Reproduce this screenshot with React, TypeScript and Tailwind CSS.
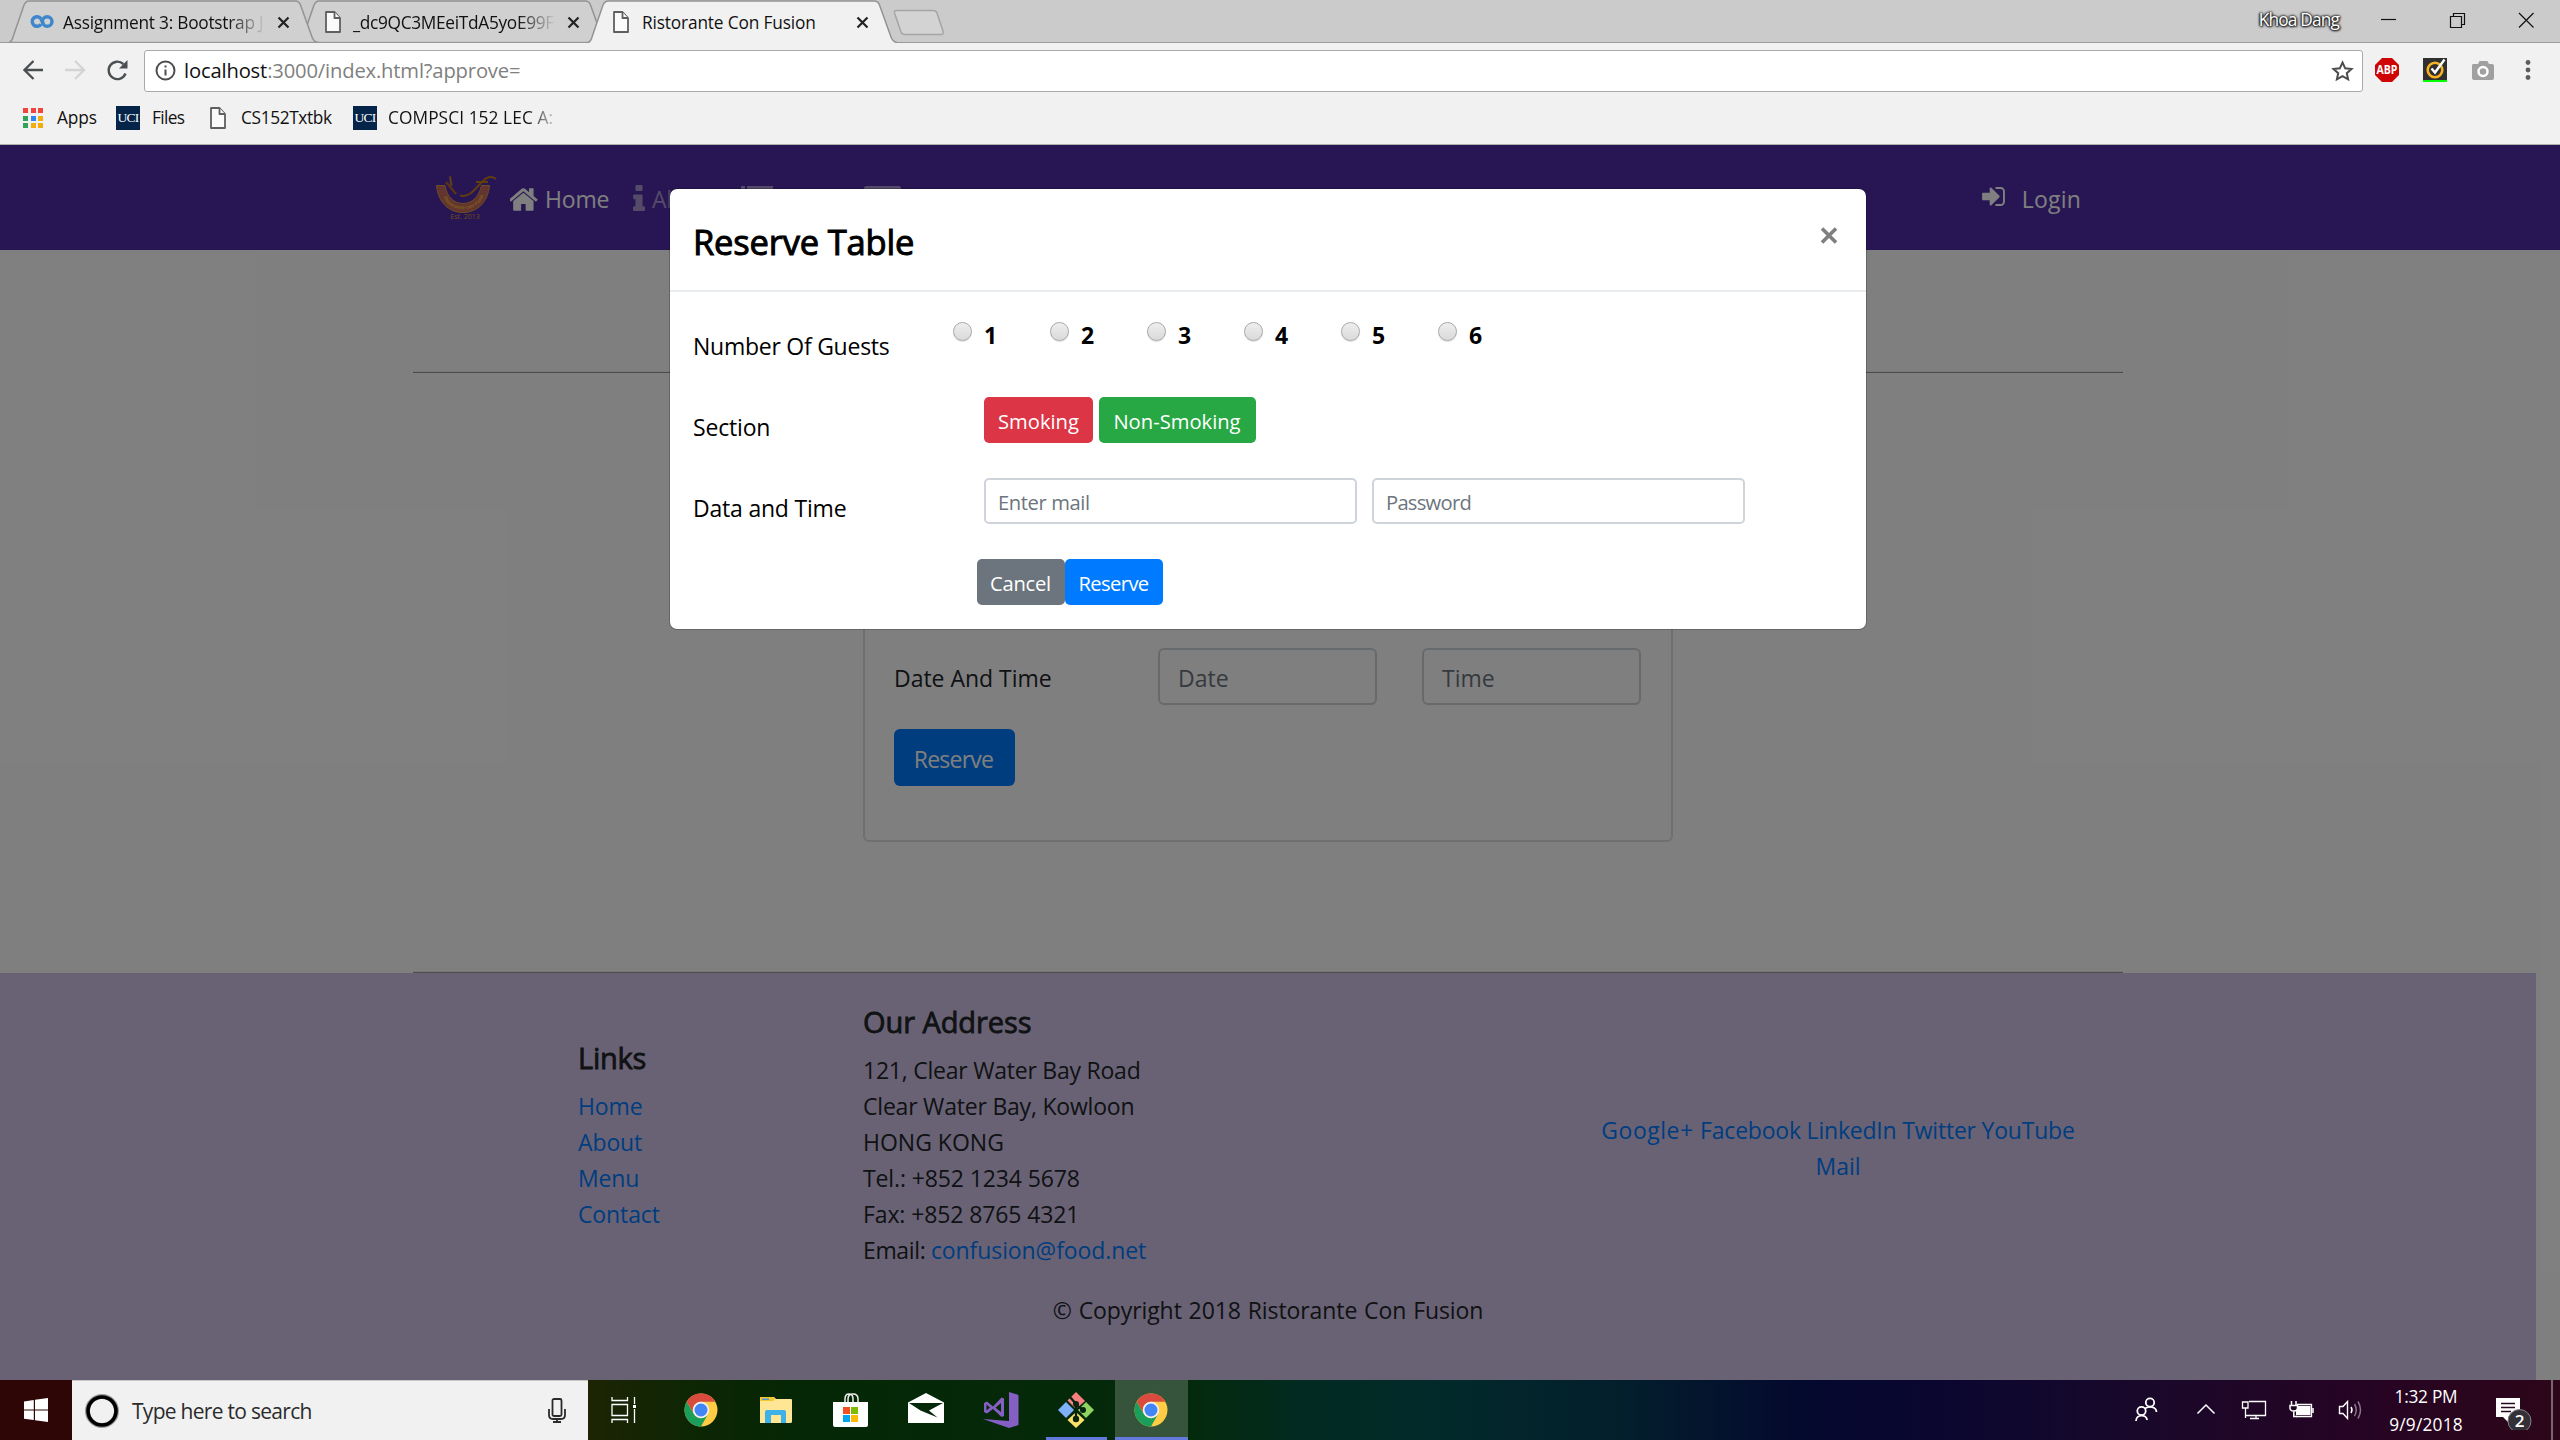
import type { ReactNode } from "react";

function DocIcon({ className = "" }: { className?: string }) {
  return (
    <svg className={className} width="16" height="22" viewBox="0 0 16 22" fill="#fafafa" stroke="#5f5f5f" strokeWidth="1.8" strokeLinejoin="round">
      <path d="M1 1h8.5L15 7v14H1z" />
      <path d="M9.5 1v6H15" />
    </svg>
  );
}

function CourseraIcon() {
  return (
    <svg width="24" height="13" viewBox="0 0 24 13" fill="none" stroke="#3f87cc" strokeWidth="3.4">
      <path d="M11 9.2A4.8 4.8 0 1 1 11 3.8" />
      <path d="M11 3.8L13.4 9.2" />
      <circle cx="17.2" cy="6.5" r="4.8" />
    </svg>
  );
}

function Tab({ icon, title, active, z, fade, iconPad, tracking }: { icon: ReactNode; title: string; active?: boolean; z: string; fade?: boolean; iconPad: string; tracking: string }) {
  return (
    <div className={`relative flex h-[43px] w-[309px] shrink-0 items-center ${z} ${iconPad}`}>
      <svg className="absolute inset-0" width="309" height="43" viewBox="0 0 309 43">
        <path d="M0 43C2 42 3 41 4 37L15 5C16.5 2 17.5 1 20 1H286C289 1 290.500 2 291.500 5L303 37C304.500 41 306 42 309 43Z" fill={active ? "#f1f1f1" : "#d0d0d0"} />
        <path d="M0 42.500C2 42 3 41 4 37L15 5C16.500 2 17.500 1 20 1H286C289 1 290.500 2 291.500 5L303 37C304.500 41 306 42 309 42.500" fill="none" stroke="#939393" strokeWidth="1.500" />
        {!active && <path d="M0 42.400H309" stroke="#989898" strokeWidth="1.200" />}
      </svg>
      <div className="relative flex w-[54px] shrink-0 items-center">{icon}</div>
      <div className={`absolute left-[54px] top-[11px] whitespace-nowrap text-[17.300px] leading-6 text-[#111] ${tracking} ${fade ? "[mask-image:linear-gradient(to_right,black_165px,transparent_203px)]" : ""}`}>{title}</div>
      <svg className="absolute left-[268px] top-[16px]" width="13" height="13" viewBox="0 0 13 13" stroke="#222" strokeWidth="2.200">
        <path d="M1.500 1.500L11.500 11.500M11.500 1.500L1.500 11.500" />
      </svg>
    </div>
  );
}

function Uci() {
  return <span className="flex h-6 w-6 items-center justify-center bg-[#04244a] font-['Liberation_Serif',serif] text-[13.500px] leading-none tracking-[-0.06em] text-white">UCI</span>;
}

const appColors = ["#f2443a", "#f2443a", "#f2443a", "#34a35a", "#2f86f0", "#f5ad0c", "#34a35a", "#f5ad0c", "#f5ad0c"];

function BrowserChrome() {
  return (
    <header className="flex h-[145px] shrink-0 flex-col border-b border-[#b0b0b0] bg-[#f1f1f1]">
      <div className="flex h-[43px] shrink-0 border-b border-[#9a9a9a] bg-[#cbcbcb] pl-[9px]">
        <Tab z="z-20" iconPad="pl-[21px]" icon={<CourseraIcon />} title="Assignment 3: Bootstrap J" fade tracking="tracking-[-0.014em]" />
        <div className="-ml-[19.500px]">
          <Tab z="z-10" iconPad="pl-[26px]" icon={<DocIcon />} title="_dc9QC3MEeiTdA5yoE99F" fade tracking="tracking-[-0.018em]" />
        </div>
        <div className="relative z-30 -ml-[19.500px]">
          <Tab active z="z-30" iconPad="pl-[25px]" icon={<DocIcon />} title="Ristorante Con Fusion" tracking="tracking-[-0.009em]" />
        </div>
        <svg className="-ml-1 mt-[9px]" width="52" height="27" viewBox="0 0 52 27" fill="#d3d3d3" stroke="#a5a5a5" strokeWidth="1.500">
          <path d="M3 1.500H40Q43 1.500 44 4L50 22Q51 25.500 48 25.500H12Q9 25.500 8 23L1.500 4Q1 1.500 3 1.500Z" />
        </svg>
        <div className="ml-auto flex h-[39px] items-center">
          <span className="mr-[41px] text-[17.300px] leading-6 tracking-[-0.048em] text-white [text-shadow:0_0_2px_#111,0_0_3px_#222,1px_1px_2px_#222,-1px_0_2px_#333]">Khoa Dang</span>
          <svg width="180" height="39" viewBox="0 0 180 39" fill="none" stroke="#111" strokeWidth="1.200">
            <path d="M1 19.500H16" />
            <path d="M70.500 16.500H81.500V27.500H70.500ZM73.500 16.500V13.500H84.500V24.500H81.500" />
            <path d="M139 13L153.500 27.500M153.500 13L139 27.500" />
          </svg>
        </div>
      </div>

      <div className="flex h-[54px] shrink-0 items-center">
        <svg className="ml-[23px]" width="106" height="24" viewBox="0 0 106 24" fill="none">
          <path d="M20 12H1.500M10.500 3L1.500 12L10.500 21" stroke="#4c4f52" strokeWidth="2.300" />
          <path d="M42 12H61M52 3L61 12L52 21" stroke="#d4d4d4" strokeWidth="2.300" />
          <path d="M102.500 15.500A8.700 8.700 0 1 1 100.300 6" stroke="#4c4f52" strokeWidth="2.400" />
          <path d="M104.500 2V10.500H96Z" fill="#4c4f52" />
        </svg>
        <div className="ml-[15px] mt-px flex h-[42px] w-[2219px] items-center rounded-[3px] border-[1.500px] border-[#aaa] bg-white pl-[10px] pr-[8px]">
          <svg width="21" height="21" viewBox="0 0 21 21" fill="none" stroke="#4d4d4d" strokeWidth="2">
            <circle cx="10.500" cy="10.500" r="9" />
            <path d="M10.500 9.500V15.500M10.500 5.500V7.500" />
          </svg>
          <span className="-mt-px ml-[8px] text-[20.200px] leading-7 tracking-[-0.008em] text-[#111]">
            localhost<span className="text-[#808080]">:3000/index.html?approve=</span>
          </span>
          <svg className="ml-auto" width="23" height="22" viewBox="0 0 23 22" fill="none" stroke="#4c4c4c" strokeWidth="2">
            <path d="M11.500 2.500L14.200 8.300L20.500 9L15.800 13.200L17.100 19.400L11.500 16.200L5.900 19.400L7.200 13.200L2.500 9L8.800 8.300Z" />
          </svg>
        </div>
        <svg className="ml-[12px]" width="160" height="24" viewBox="0 0 160 24">
          <path d="M7 0H17L24 7V17L17 24H7L0 17V7Z" fill="#cf0505" />
          <text x="12" y="16.200" textAnchor="middle" fill="#fff" fontFamily="Open Sans, sans-serif" fontWeight="700" fontSize="11.500" textLength="21" lengthAdjust="spacingAndGlyphs">ABP</text>
          <path d="M48 0H72V24H48Z" fill="#303030" />
          <path d="M48 22H72V24H48Z" fill="#0f0" />
          <circle cx="60" cy="12" r="7.300" fill="none" stroke="#f6b221" strokeWidth="2.600" />
          <path d="M56.500 10.500L60 14.500L69.500 1.500" fill="none" stroke="#fff" strokeWidth="2.400" />
          <path d="M98 6H103L104.500 3H112.500L114 6H117Q119 6 119 8V20Q119 22 117 22H99Q97 22 97 20V8Q97 6 98 6Z" fill="#a0a0a0" />
          <circle cx="108" cy="13.500" r="4.500" fill="#a0a0a0" stroke="#fff" strokeWidth="2.500" />
          <g fill="#5a5d61"><circle cx="153" cy="4.500" r="2.400" /><circle cx="153" cy="12" r="2.400" /><circle cx="153" cy="19.500" r="2.400" /></g>
        </svg>
      </div>

      <nav className="flex h-[42px] items-center pl-[23px] text-[17.300px] leading-6 text-[#111]">
        <div className="grid w-5 grid-cols-3 gap-[2.500px]">
          {appColors.map((c, i) => <span key={i} className="h-[5px] w-[5px]" style={{ backgroundColor: c }} />)}
        </div>
        <span className="ml-[14px] w-[59px] tracking-[-0.006em]">Apps</span>
        <Uci />
        <span className="ml-3 w-[58px] tracking-[-0.036em]">Files</span>
        <DocIcon />
        <span className="ml-[15px] w-[112px] tracking-[-0.021em]">CS152Txtbk</span>
        <Uci />
        <span className="ml-[11px] whitespace-nowrap tracking-[0.005em] [mask-image:linear-gradient(to_right,black_140px,transparent_172px)]">COMPSCI 152 LEC A:</span>
      </nav>
    </header>
  );
}

function BrandLogo() {
  return (
    <svg width="61" height="45" viewBox="0 0 61 45" fill="none">
      <path d="M0.500 10.500H9C11 22 18 28.500 27 28.500S43 22 45.500 10.500H53.500C52 27 41.500 37.500 27 37.500S2 27 0.500 10.500Z" fill="#c86a5c" stroke="#d09a50" strokeWidth="1" />
      <path id="brand-arc" d="M7 20C11 39 43 39 47.500 20" />
      <text fill="#f0b93a" fontSize="5" fontFamily="Open Sans, sans-serif" fontWeight="700">
        <textPath href="#brand-arc" startOffset="2">Ristorante con Fusion</textPath>
      </text>
      <path d="M10 7L20 19" stroke="#b0662a" strokeWidth="2.500" />
      <path d="M14 1.500L15.500 11" stroke="#c88030" strokeWidth="2" />
      <path d="M24 20.500C33 23 38 15 46 7C50 2.500 55 0 60 4M40 7H52" stroke="#c07a1c" strokeWidth="2" />
      <text x="29" y="44" textAnchor="middle" fontSize="7" fontFamily="Open Sans, sans-serif" fill="#d39a35">Est. 2013</text>
    </svg>
  );
}

function Navbar() {
  return (
    <div className="flex h-[105px] items-center bg-[#512da8] pl-[436px] text-[23px] leading-9">
      <BrandLogo />
      <svg className="ml-[13px] mt-[3px]" width="29" height="23" viewBox="76 253 1640 1283" fill="#fff">
        <path d="M1408 992v480q0 26-19 45t-45 19h-384v-384h-256v384h-384q-26 0-45-19t-19-45v-480q0-1 .5-3t.5-3l575-474 575 474q1 2 1 6zm223-69l-62 74q-8 9-21 11h-3q-13 0-21-7l-692-577-692 577q-12 8-24 7-13-2-21-11l-62-74q-8-10-7-23.500t11-21.500l719-599q32-26 76-26t76 26l244 204v-195q0-14 9-23t23-9h192q14 0 23 9t9 23v408l219 182q10 8 11 21.500t-7 23.500z" />
      </svg>
      <span className="ml-[6px] mt-[3px] w-[88px] tracking-[-0.008em] text-white">Home</span>
      <svg className="opacity-50" width="12" height="26" viewBox="576 128 640 1408" fill="#fff">
        <path d="M1216 1344v128q0 26-19 45t-45 19h-512q-26 0-45-19t-19-45v-128q0-26 19-45t45-19h64v-384h-64q-26 0-45-19t-19-45v-128q0-26 19-45t45-19h384q26 0 45 19t19 45v576h64q26 0 45 19t19 45zm-128-1152v192q0 26-19 45t-45 19h-256q-26 0-45-19t-19-45v-192q0-26 19-45t45-19h256q26 0 45 19t19 45z" />
      </svg>
      <span className="ml-[7px] mt-[3px] w-[89px] text-white/50">About</span>
      <svg className="-mt-[1px] opacity-50" width="160" height="22" viewBox="0 0 160 22" fill="#fff">
        <path d="M0 0H4V4H0ZM6 0H32V4H6ZM0 8H4V12H0ZM6 8H32V12H6ZM0 16H4V20H0ZM6 16H32V20H6Z" />
        <rect x="123" y="0" width="37" height="22" rx="2.500" />
      </svg>
      <svg className="mb-[3px] ml-auto" width="23" height="19" viewBox="128 256 1536 1280" fill="#fff">
        <path d="M1312 896q0 26-19 45l-544 544q-19 19-45 19t-45-19-19-45v-288h-448q-26 0-45-19t-19-45v-384q0-26 19-45t45-19h448v-288q0-26 19-45t45-19 45 19l544 544q19 19 19 45zm352-352v704q0 119-84.500 203.500t-203.500 84.500h-320q-13 0-22.500-9.500t-9.500-22.500q0-4-1-20t-.5-26.500 3-23.500 10-19.500 20.500-6.500h320q66 0 113-47t47-113v-704q0-66-47-113t-113-47h-312l-11.500-1-11.500-3-8-5.500-7-9-2-13.500q0-4-1-20t-.5-26.500 3-23.500 10-19.500 20.500-6.500h320q119 0 203.500 84.500t84.500 203.500z" />
      </svg>
      <span className="ml-[17px] mr-[479px] mt-[3px] tracking-[0.008em] text-white">Login</span>
    </div>
  );
}

function ReservationCard() {
  return (
    <div className="ml-[863px] mt-[47px] flex h-[422px] w-[810px] flex-col justify-end rounded-[6px] border-2 border-black/[.125] pb-[54px] pl-[29px] text-[23px] leading-9">
      <div className="flex items-center">
        <span className="w-[264px] pt-[2px] tracking-[-0.001em]">Date And Time</span>
        <div className="flex h-[57px] w-[219px] items-center rounded-[6px] border-2 border-[#ced4da] pl-[18px] pt-[3px] text-[#6c757d]">Date</div>
        <div className="ml-[45px] flex h-[57px] w-[219px] items-center rounded-[6px] border-2 border-[#ced4da] pl-[18px] pt-[3px] text-[#6c757d]">Time</div>
      </div>
      <div className="mt-[24px] flex h-[57px] w-[121px] items-center justify-center rounded-[6px] bg-[#007bff] pr-[2px] pt-[2px] tracking-[-0.033em] text-white">Reserve</div>
    </div>
  );
}

const linkList = ["Home", "About", "Menu", "Contact"];

function Footer() {
  return (
    <footer className="h-[407px] w-[2536px] bg-[#d1c4e9] text-[23px] leading-9">
      <div className="flex h-[301px]">
        <div className="ml-[578px] w-[285px] pt-[67px]">
          <h5 className="text-[29px] leading-9 tracking-[-0.008em] [-webkit-text-stroke:0.8px]">Links</h5>
          <ul className="mt-[12px] text-[#007bff]">
            {linkList.map((l) => <li key={l} className="tracking-[-0.005em]">{l}</li>)}
          </ul>
        </div>
        <div className="w-[720px] pt-[31px]">
          <h5 className="text-[29px] leading-9 tracking-[-0.003em] [-webkit-text-stroke:0.8px]">Our Address</h5>
          <address className="mt-[12px] not-italic">
            <div className="tracking-[-0.010em]">121, Clear Water Bay Road</div>
            <div className="tracking-[-0.009em]">Clear Water Bay, Kowloon</div>
            <div>HONG KONG</div>
            <div className="tracking-[-0.005em]">Tel.: +852 1234 5678</div>
            <div className="tracking-[-0.005em]">Fax: +852 8765 4321</div>
            <div className="tracking-[-0.004em]"><span className="tracking-[-0.016em]">Email: </span><span className="text-[#007bff]">confusion@food.net</span></div>
          </address>
        </div>
        <div className="ml-[5px] w-[500px] pt-[139px] text-center text-[#007bff]">
          <div className="whitespace-nowrap tracking-[-0.009em]"><span className="tracking-[0.022em]">Google+ </span>Facebook LinkedIn Twitter YouTube</div>
          <div>Mail</div>
        </div>
      </div>
      <p className="pt-[18px] text-center tracking-[-0.004em] [word-spacing:1px]">© Copyright 2018 Ristorante Con Fusion</p>
    </footer>
  );
}

function Row({ label, tracking, children }: { label?: string; tracking?: string; children: ReactNode }) {
  return (
    <div className="flex h-[81px] items-center">
      <span className={`w-[291px] shrink-0 pt-[14px] text-[23px] leading-9 text-black ${tracking ?? ""}`}>{label}</span>
      {children}
    </div>
  );
}

function ReserveModal() {
  return (
    <div className="absolute left-[669px] top-[43px] h-[442px] w-[1198px] overflow-hidden rounded-[8px] border-[1.500px] border-black/20 bg-white bg-clip-padding">
      <div className="flex h-[103px] items-start border-b-2 border-[#e9ecef] pl-[23px] pr-[28px]">
        <h4 className="mt-[26px] text-[34.500px] leading-[54px] tracking-[-0.005em] text-black [-webkit-text-stroke:1px]">Reserve Table</h4>
        <svg className="ml-auto mt-[38px]" width="18" height="17" viewBox="0 0 18 17" stroke="#7f7f7f" strokeWidth="3.600">
          <path d="M2 1.500L16 15.500M16 1.500L2 15.500" />
        </svg>
      </div>
      <div className="pl-[23px] pt-[6px]">
        <Row label="Number Of Guests" tracking="tracking-[-0.011em]">
          <div className="-ml-[31px] flex">
            {[1, 2, 3, 4, 5, 6].map((n) => (
              <label key={n} className="flex w-[97px] items-center">
                <span className="-mt-[14px] h-[19px] w-[19px] rounded-full border-[1.500px] border-[#a9a9a9] bg-gradient-to-b from-[#eee] to-[#dadada] shadow-[0_1px_1px_#ddd]" />
                <span className="-mt-[7px] ml-[12px] text-[23px] font-bold leading-9 text-black">{n}</span>
              </label>
            ))}
          </div>
        </Row>
        <Row label="Section" tracking="tracking-[-0.008em]">
          <div className="flex h-[46px] w-[109px] items-center justify-center rounded-[5px] bg-[#dc3545] pt-[4px] text-[20.200px] text-white">Smoking</div>
          <div className="ml-[6px] flex h-[46px] w-[157px] items-center justify-center rounded-[5px] bg-[#28a745] pr-px pt-[4px] text-[20.200px] text-white">Non-Smoking</div>
        </Row>
        <Row label="Data and Time" tracking="tracking-[-0.009em]">
          <div className="flex h-[46px] w-[373px] items-center rounded-[5px] border-2 border-[#ced4da] pl-[12px] pt-[4px] text-[20.200px] tracking-[-0.020em] text-[#6c757d]">Enter mail</div>
          <div className="ml-[15px] flex h-[46px] w-[373px] items-center rounded-[5px] border-2 border-[#ced4da] pl-[12px] pt-[4px] text-[20.200px] tracking-[-0.037em] text-[#6c757d]">Password</div>
        </Row>
        <Row>
          <div className="-ml-[7px] flex h-[46px] w-[88px] items-center justify-center rounded-[5px] bg-[#6c757d] pr-px pt-[4px] text-[20.200px] tracking-[-0.012em] text-white">Cancel</div>
          <div className="flex h-[46px] w-[98px] items-center justify-center rounded-[5px] bg-[#007bff] pr-px pt-[4px] text-[20.200px] tracking-[-0.030em] text-white">Reserve</div>
        </Row>
      </div>
    </div>
  );
}

function ChromeIcon() {
  return (
    <svg width="34" height="34" viewBox="0 0 34 34">
      <circle cx="17" cy="17" r="16.500" fill="#fc4" />
      <path d="M2.700 8.800A16.500 16.500 0 0 1 31.300 8.800H17A8.200 8.200 0 0 0 9.900 21.100Z" fill="#d94b3f" />
      <path d="M2.700 8.800A16.500 16.500 0 0 0 17 33.500L24.100 21.100A8.200 8.200 0 0 1 9.900 21.100Z" fill="#1a9e5a" />
      <circle cx="17" cy="17" r="8.200" fill="#f1f1f1" />
      <circle cx="17" cy="17" r="6.500" fill="#4285f4" />
    </svg>
  );
}

function TaskIcon({ children, active, running }: { children: ReactNode; active?: boolean; running?: boolean }) {
  return (
    <div className={`relative flex h-full shrink-0 items-center justify-center ${active ? "ml-[2px] w-[73px] bg-white/20 pr-[2px]" : "w-[75px]"}`}>
      {children}
      {(active || running) && <span className={`absolute bottom-0 h-[3px] bg-[#6379dc] ${active ? "left-0 w-full" : "left-[8px] w-[61px]"}`} />}
    </div>
  );
}

function Taskbar() {
  return (
    <div className="flex h-[60px] shrink-0 items-center bg-[linear-gradient(to_right,#2d0605_0px,#2d0605_72px,#1d2404_588px,#0c2604_700px,#052705_800px,#042a0c_1190px,#022a22_1310px,#022a2a_1430px,#031f2c_1620px,#04092e_1800px,#0a0630_1930px,#14082c_2080px,#1a082a_2150px,#250424_2350px,#2d0619_2560px)] text-white">
      <div className="flex h-full w-[72px] shrink-0 items-center justify-center">
        <svg width="24" height="24" viewBox="0 0 24 24" fill="#fff">
          <path d="M0 3.400L9.800 2V11.500H0ZM11 1.800L24 0V11.500H11ZM0 12.600H9.800V22.100L0 20.700ZM11 12.600H24V24L11 22.200Z" />
        </svg>
      </div>
      <div className="flex h-full w-[516px] shrink-0 items-center border-t border-[#c8c8c8] bg-[#f1f1f1] pl-[13px]">
        <svg width="34" height="34" viewBox="0 0 34 34" fill="none">
          <circle cx="17" cy="17" r="14.500" stroke="#999" strokeWidth="5" />
          <circle cx="17" cy="17" r="14" stroke="#000" strokeWidth="3.600" />
        </svg>
        <span className="ml-[13px] text-[21px] leading-8 tracking-[-0.034em] text-[#2b2b2b]">Type here to search</span>
        <svg className="ml-auto mr-[22px]" width="18" height="25" viewBox="0 0 18 25" fill="none" stroke="#2b2b2b" strokeWidth="1.800">
          <rect x="4.500" y="1" width="9" height="17" rx="1.500" />
          <path d="M1 11V17Q1 21 5 21H13Q17 21 17 17V11M9 21V24M5 24H13" />
        </svg>
      </div>
      <TaskIcon>
        <svg className="mr-[3px]" width="26" height="26" viewBox="0 0 26 26" fill="none" stroke="#fff" strokeWidth="1.300">
          <path d="M1 7.500H16.500V18.500H1ZM1 0V3.500H16.500V0M1 26V22.500H16.500V26M23.500 0V7M23.500 12V26" />
          <path d="M22 8H25V11H22Z" fill="#fff" stroke="none" />
        </svg>
      </TaskIcon>
      <TaskIcon><ChromeIcon /></TaskIcon>
      <TaskIcon>
        <svg width="32" height="28" viewBox="0 0 32 28">
          <path d="M0 2Q0 1 1 1H14L16 3H31Q32 3 32 4V25Q32 27 31 27H0Z" fill="#ffe694" />
          <path d="M0 5V1.500Q0 1 1 1H13L15 3L13 5Z" fill="#f7c52e" />
          <path d="M2 2.500H9V4H2Z" fill="#4d9ad6" />
          <path d="M5 27V16Q5 14 7 14H24Q26 14 26 16V27H21V19H11V27Z" fill="#3cb2e8" />
        </svg>
      </TaskIcon>
      <TaskIcon>
        <svg width="35" height="36" viewBox="0 0 35 36">
          <path d="M12 11V7Q12 2 16 2T20 7V11M15 11V7Q15 2 20 2T25 7V11" fill="none" stroke="#eee" strokeWidth="1.500" />
          <path d="M0 10H35V33Q35 35 33 35H2Q0 35 0 33Z" fill="#fff" />
          <path d="M10 15H17V22H10Z" fill="#f25022" /><path d="M18 15H25V22H18Z" fill="#7fba00" />
          <path d="M10 23H17V30H10Z" fill="#00a4ef" /><path d="M18 23H25V30H18Z" fill="#ffb900" />
        </svg>
      </TaskIcon>
      <TaskIcon>
        <svg className="-mt-[4px]" width="36" height="30" viewBox="0 0 36 30">
          <path d="M0 9.500L18 0L36 9.500V30H0Z" fill="#fff" />
          <path d="M1 10H35L21 17.500L29.500 24.500L12.500 17.500Z" fill="#06280a" />
        </svg>
      </TaskIcon>
      <TaskIcon>
        <svg width="36" height="36" viewBox="0 0 36 36" fill="#865fc5">
          <path d="M26 0L35.500 3V33L26 36L0 27L26 29Z" />
          <path d="M1 11L4 9.500L10 14.500L18.500 5.500L21 6.500V24L18.500 25L10 17L4 21.500L1 20ZM3.500 12.500V18.500L7 15.600ZM12.500 15.700L18 20V11Z" fillRule="evenodd" />
        </svg>
      </TaskIcon>
      <TaskIcon running>
        <svg width="36" height="36" viewBox="0 0 36 36">
          <path d="M18 0L27 9L18 17L9.500 8.500Z" fill="#f98080" />
          <path d="M8 10L16 18L8 26L0 18Z" fill="#7fb0fa" />
          <path d="M28 10L36 18L28 26L20 18Z" fill="#8fd45f" />
          <path d="M18 20L26.500 28L18 36L9.500 28Z" fill="#fbe06a" />
          <path d="M12 5L18 12V27M18 13L25 18" stroke="#062410" strokeWidth="2.400" fill="none" />
          <g fill="#062410"><circle cx="18" cy="12" r="3" /><circle cx="25" cy="18" r="3" /><circle cx="18" cy="27" r="3.200" /></g>
        </svg>
      </TaskIcon>
      <TaskIcon active><ChromeIcon /></TaskIcon>

      <svg className="ml-auto shrink-0" width="228" height="30" viewBox="2136 1395 228 30" fill="none" stroke="#fff" strokeWidth="1.800">
        <circle cx="2152" cy="1402.500" r="4.200" />
        <path d="M2147 1408.500C2151 1406 2158 1406 2158.500 1412" />
        <circle cx="2143.500" cy="1411" r="4.200" />
        <path d="M2138 1421C2138 1414 2149 1414 2149 1420" />
        <path d="M2199.500 1413.500L2208 1405L2216.500 1413.500" strokeWidth="1.500" />
        <path d="M2251 1401.500H2267.500V1415.500H2248M2244.500 1402H2250V1408H2244.500ZM2247.500 1408V1418M2258 1415.500V1418.500M2252 1418.500H2261" strokeWidth="1.300" />
        <path d="M2299 1404.500H2313.500V1416.500H2298" strokeWidth="1.300" />
        <path d="M2300 1406H2312.500V1415H2298V1411Z" fill="#fff" stroke="none" />
        <path d="M2315 1408V1413M2293.500 1401V1405M2298 1401V1405M2292 1405.500H2299.500V1408Q2299.500 1411 2295.800 1411T2292 1408ZM2295.800 1411V1416.500H2299" strokeWidth="1.500" />
        <path d="M2341.500 1406.500H2345L2349.500 1401.500V1418.500L2345 1413.500H2341.500Z" strokeWidth="1.400" />
        <path d="M2353 1407Q2355 1410 2353 1413" strokeWidth="1.500" />
        <path d="M2356.500 1404Q2360 1410 2356.500 1416M2360 1401.500Q2365 1410 2360 1418.500" stroke="#fff" strokeOpacity="0.450" strokeWidth="1.500" />
      </svg>
      <div className="ml-[11px] mt-[2px] w-[106px] shrink-0 text-center text-[17.300px] leading-7">
        <div className="tracking-[-0.015em]">1:32 PM</div>
        <div className="tracking-[0.012em]">9/9/2018</div>
      </div>
      <svg className="ml-[15px] shrink-0" width="40" height="40" viewBox="0 0 40 40">
        <path d="M2 8H26V27H14V32L9 27H2Z" fill="#fff" />
        <path d="M7 13.500H21M7 17.500H21M7 21.500H17" stroke="#2a0620" strokeWidth="1.300" />
        <circle cx="25.500" cy="31" r="11.500" fill="#333036" stroke="#85808a" strokeWidth="1" />
        <text x="25.500" y="36.500" textAnchor="middle" fill="#fff" fontSize="17" fontWeight="600" fontFamily="Open Sans, sans-serif">2</text>
      </svg>
      <span className="ml-[17px] mr-[7px] h-full w-[2px] shrink-0 bg-[#776672]" />
    </div>
  );
}

export default function App() {
  return (
    <div className="flex h-[1440px] w-[2560px] flex-col overflow-hidden bg-white font-['Open_Sans','Noto_Sans',sans-serif] text-[#212529]">
      <BrowserChrome />
      <main className="relative h-[1235px] shrink-0 overflow-hidden bg-white">
        <Navbar />
        <div className="ml-[413px] mt-[121px] h-[2px] w-[1710px] border-b border-[#999] bg-[#eee]" />
        <ReservationCard />
        <div className="ml-[413px] mt-[129px] h-[2px] w-[1710px] border-b border-[#999] bg-[#eee]" />
        <Footer />
        <div className="absolute inset-0 bg-black/50" />
        <ReserveModal />
      </main>
      <Taskbar />
    </div>
  );
}
